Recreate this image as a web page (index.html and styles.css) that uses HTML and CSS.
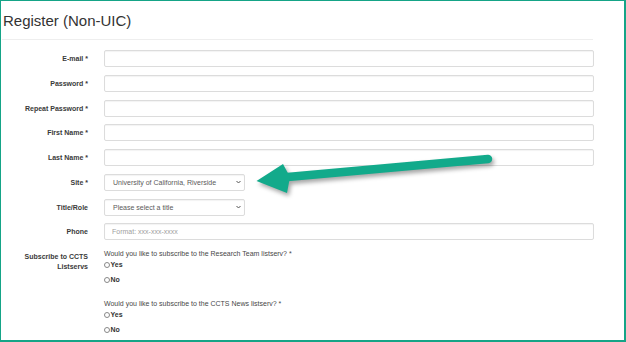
FILE: index.html
```html
<!DOCTYPE html>
<html>
<head>
<meta charset="utf-8">
<link rel="stylesheet" href="styles.css">
</head>
<body>
<div class="frame">
  <h3 class="title">Register (Non-UIC)</h3>
  <div class="rule"></div>
  <form class="form">
    <div class="row"><label class="lbl">E-mail *</label><input class="ctl" type="text"></div>
    <div class="row"><label class="lbl">Password *</label><input class="ctl" type="password"></div>
    <div class="row"><label class="lbl">Repeat Password *</label><input class="ctl" type="password"></div>
    <div class="row"><label class="lbl">First Name *</label><input class="ctl" type="text"></div>
    <div class="row"><label class="lbl">Last Name *</label><input class="ctl" type="text"></div>
    <div class="row"><label class="lbl">Site *</label>
      <div class="ctl select"><span>University of California, Riverside</span>
        <svg class="chev" width="5" height="4" viewBox="0 0 5 4"><path d="M0.5 1 L2.5 3 L4.5 1" fill="none" stroke="#555" stroke-width="1"/></svg>
      </div>
    </div>
    <div class="row"><label class="lbl">Title/Role</label>
      <div class="ctl select"><span>Please select a title</span>
        <svg class="chev" width="5" height="4" viewBox="0 0 5 4"><path d="M0.5 1 L2.5 3 L4.5 1" fill="none" stroke="#555" stroke-width="1"/></svg>
      </div>
    </div>
    <div class="row"><label class="lbl">Phone</label><input class="ctl" type="text" placeholder="Format: xxx-xxx-xxxx"></div>
    <div class="row sub">
      <label class="lbl multi">Subscribe to CCTS<br>Listservs</label>
      <div class="groups">
        <div class="group">
          <div class="question">Would you like to subscribe to the Research Team listserv? *</div>
          <div class="radio"><span class="dot"></span><b>Yes</b></div>
          <div class="radio"><span class="dot"></span><b>No</b></div>
        </div>
        <div class="group">
          <div class="question">Would you like to subscribe to the CCTS News listserv? *</div>
          <div class="radio"><span class="dot"></span><b>Yes</b></div>
          <div class="radio"><span class="dot"></span><b>No</b></div>
        </div>
      </div>
    </div>
  </form>
  <svg class="arrow" width="626" height="342" viewBox="0 0 626 342">
    <line x1="282" y1="177.5" x2="488" y2="159" stroke="#12aa8b" stroke-width="8.5" stroke-linecap="round"/>
    <polygon points="256.5,181 283,164 290,177 287,193" fill="#12aa8b"/>
  </svg>
</div>
</body>
</html>
```

FILE: styles.css
```css
* { box-sizing: border-box; }
html, body { margin: 0; padding: 0; background: #fff; }
body { font-family: "Liberation Sans", Arial, sans-serif; color: #333; }
.frame {
  position: relative;
  width: 626px;
  height: 342px;
  border-style: solid;
  border-color: #15a487;
  border-width: 1px 2px 2px 1px;
  overflow: hidden;
}
.title {
  margin: 11px 0 0 2px;
  font-size: 15px;
  line-height: 18px;
  font-weight: normal;
  color: #333;
}
.rule {
  margin: 9px 31px 0 1px;
  border-top: 1px solid #eeeeee;
}
.form { margin: 10px 0 0 0; }
.row {
  display: flex;
  align-items: center;
  margin-bottom: 7.75px;
}
.lbl {
  width: 87px;
  flex: none;
  text-align: right;
  font-size: 7px;
  font-weight: bold;
  color: #3a3a3a;
  margin-right: 16px;
}
.ctl {
  width: 490px;
  height: 17px;
  border: 1px solid #dcdcdc;
  border-radius: 2px;
  box-shadow: inset 0 1px 1px rgba(0,0,0,0.05);
  padding: 0 0 0 7px;
  font-family: "Liberation Sans", Arial, sans-serif;
  font-size: 7px;
  color: #5a5a5a;
  background: #fff;
  outline: none;
}
.ctl::placeholder { color: #a0a0a0; }
.select {
  width: 141px;
  display: flex;
  align-items: center;
  justify-content: space-between;
  padding: 0 3px 0 8px;
}
.chev { display: block; }
.sub { align-items: flex-start; margin-top: 7.5px; }
.multi { line-height: 10px; padding-top: 3.5px; }
.question { font-size: 7px; line-height: 11px; color: #474747; }
.radio {
  display: flex;
  align-items: center;
  font-size: 7px;
  line-height: 10px;
  color: #333;
}
.question + .radio { margin-top: 1px; }
.radio + .radio { margin-top: 5px; }
.group + .group { margin-top: 13px; }
.dot {
  width: 6px;
  height: 6px;
  border: 1px solid #888;
  border-radius: 50%;
  background: #fff;
  margin-right: 0.5px;
}
.arrow {
  position: absolute;
  left: -1px;
  top: -1px;
  filter: drop-shadow(2px 3px 2px rgba(0,0,0,0.35));
  pointer-events: none;
}
```
